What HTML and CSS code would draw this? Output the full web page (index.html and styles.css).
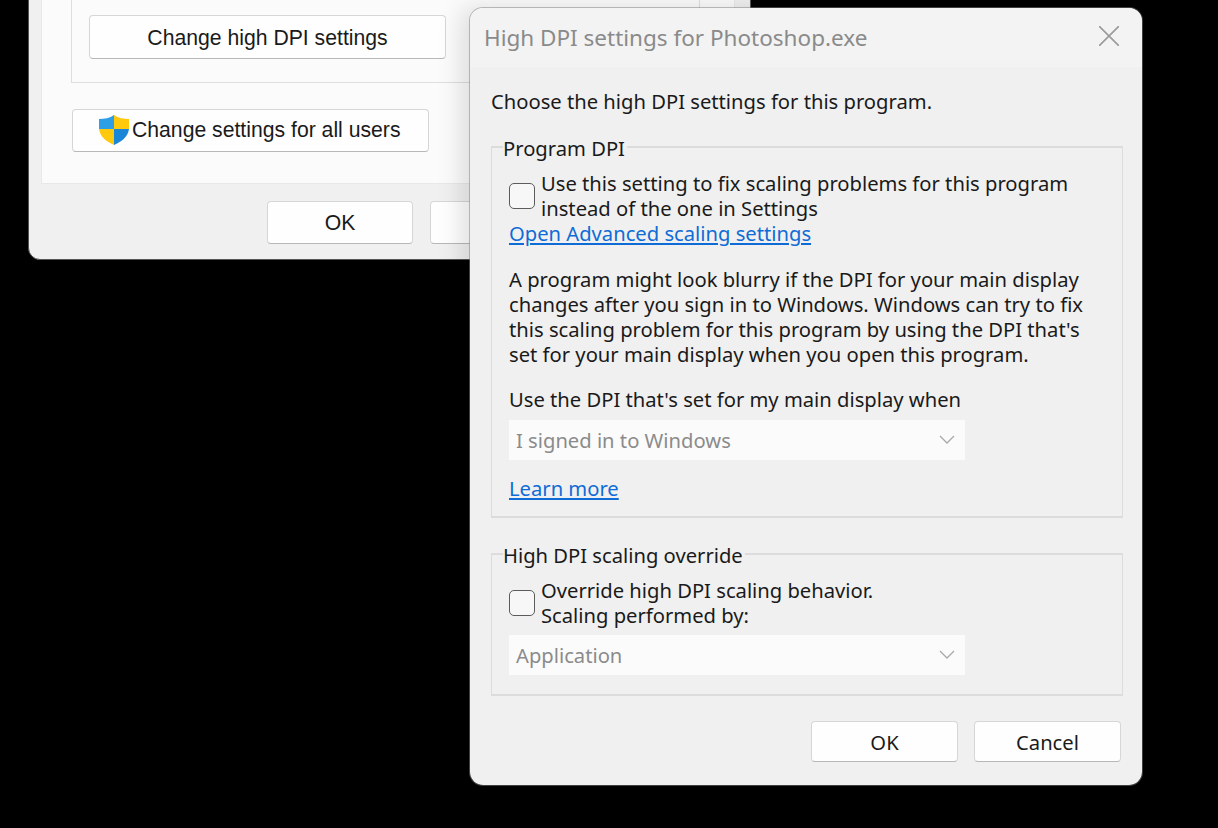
FILE: index.html
```html
<!DOCTYPE html>
<html lang="en">
<head>
    <meta charset="UTF-8">
    <title>High DPI settings for Photoshop.exe</title>
    <link rel="stylesheet" href="styles.css">
</head>
<body>

<div class="window back-window">
    <div class="back-panel">
        <div class="back-group">
            <button class="btn btn-dpi">Change high DPI settings</button>
        </div>
        <button class="btn btn-users">
            <svg class="shield" width="32" height="32" viewBox="0 0 32 32">
                <path d="M16 1 C12 4 6 5 1 5 V15 H16 Z" fill="#2c9fe6"/>
                <path d="M16 1 C20 4 26 5 31 5 V15 H16 Z" fill="#ffc90e"/>
                <path d="M1 15 H16 V31 C9 28 2 23 1 15 Z" fill="#ffc90e"/>
                <path d="M31 15 H16 V31 C23 28 30 23 31 15 Z" fill="#1a86d8"/>
            </svg>
            Change settings for all users
        </button>
    </div>
    <div class="back-footer">
        <button class="btn btn-footer">OK</button>
        <button class="btn btn-footer"></button>
    </div>
</div>

<div class="window dialog">
    <div class="title-bar">
        <span class="title">High DPI settings for Photoshop.exe</span>
        <svg class="close" width="20" height="20" viewBox="0 0 20 20">
            <path d="M0 0 L20 20 M20 0 L0 20" stroke="#9a9a9a" stroke-width="1.6" fill="none"/>
        </svg>
    </div>
    <div class="dialog-body">
        <p class="intro">Choose the high DPI settings for this program.</p>

        <fieldset class="group group-program">
            <legend>Program DPI</legend>
            <div class="check-row">
                <span class="checkbox"></span>
                <span>Use this setting to fix scaling problems for this program<br>instead of the one in Settings</span>
            </div>
            <a class="link" href="#">Open Advanced scaling settings</a>
            <p class="desc">A program might look blurry if the DPI for your main display<br>changes after you sign in to Windows. Windows can try to fix<br>this scaling problem for this program by using the DPI that's<br>set for your main display when you open this program.</p>
            <p class="use-label">Use the DPI that's set for my main display when</p>
            <div class="select">
                <span>I signed in to Windows</span>
                <svg width="16" height="10" viewBox="0 0 16 10"><path d="M1 1 L8 8 L15 1" stroke="#a8a8a8" stroke-width="1.3" fill="none"/></svg>
            </div>
            <a class="link learn" href="#">Learn more</a>
        </fieldset>

        <fieldset class="group group-override">
            <legend>High DPI scaling override</legend>
            <div class="check-row">
                <span class="checkbox"></span>
                <span>Override high DPI scaling behavior.<br>Scaling performed by:</span>
            </div>
            <div class="select select-app">
                <span>Application</span>
                <svg width="16" height="10" viewBox="0 0 16 10"><path d="M1 1 L8 8 L15 1" stroke="#a8a8a8" stroke-width="1.3" fill="none"/></svg>
            </div>
        </fieldset>

        <div class="dialog-footer">
            <button class="btn btn-dialog">OK</button>
            <button class="btn btn-dialog">Cancel</button>
        </div>
    </div>
</div>

</body>
</html>
```

FILE: styles.css
```css
body {
    margin: 0;
    width: 1218px;
    height: 828px;
    background: #000;
    overflow: hidden;
    position: relative;
}
.window {
    position: absolute;
    box-sizing: border-box;
    background: #f0f0f0;
}
.btn {
    display: block;
    box-sizing: border-box;
    background: #fefefe;
    border: 1px solid #d6d6d6;
    border-bottom-color: #b8b8b8;
    border-radius: 4px;
    color: #1a1a1a;
    padding: 0;
}

/* back window */
.back-window {
    left: 28px;
    top: -100px;
    width: 723px;
    height: 360px;
    border: 1px solid #555;
    border-radius: 0 0 12px 12px;
    font-family: "Liberation Sans", Arial, sans-serif;
    font-size: 21.2px;
    display: flex;
    flex-direction: column;
}
.back-panel {
    height: 283px;
    margin-left: 12px;
    margin-right: 15px;
    background: #fbfbfb;
    border: 1px solid #e8e8e8;
    border-top: none;
    box-sizing: border-box;
    padding-left: 29px;
}
.back-group {
    box-sizing: border-box;
    height: 182px;
    margin-right: 34px;
    border: 1px solid #dedede;
    border-top: none;
    padding: 114px 0 0 17px;
}
.btn-dpi {
    width: 357px;
    height: 44px;
    padding-top: 1px;
    font: inherit;
}
.btn-users {
    display: flex;
    align-items: center;
    gap: 2px;
    width: 357px;
    height: 43px;
    margin: 26px 0 0 1px;
    padding: 0 0 2px 25px;
    font: inherit;
}
.shield {
    flex: none;
}
.back-footer {
    display: flex;
    gap: 17px;
    padding: 17px 0 0 238px;
}
.btn-footer {
    width: 146px;
    height: 43px;
    font: inherit;
}

/* dialog */
.dialog {
    left: 469px;
    top: 7px;
    width: 674px;
    height: 779px;
    border: 1px solid rgba(128, 128, 128, 0.5);
    border-radius: 14px;
    background-clip: padding-box;
    font-family: "Noto Sans", Tahoma, sans-serif;
    font-size: 20.2px;
    color: #1a1a1a;
    box-shadow: -8px 0 24px rgba(0, 0, 0, 0.12);
}
.title-bar {
    display: flex;
    justify-content: space-between;
    align-items: center;
    height: 59px;
    padding: 0 23px 4px 14px;
    box-sizing: border-box;
    background: #f3f3f3;
    border-radius: 13px 13px 0 0;
}
.title {
    margin-top: 4px;
    font-size: 22.5px;
    color: #8a8a8a;
}
.dialog-body {
    padding: 0 19px 0 21px;
}
.intro {
    margin: 0;
    padding-top: 22px;
    line-height: 25px;
}
.group {
    margin: 18px 0 0;
    padding: 0 17px;
    border: 1px solid #dcdcdc;
    border-width: 2px 1px;
    line-height: 25px;
}
.group legend {
    padding: 4px 2px 0 0;
    margin-left: -6px;
}
.check-row {
    display: flex;
    gap: 6px;
    align-items: center;
    padding-top: 10px;
}
.checkbox {
    flex: none;
    box-sizing: border-box;
    width: 26px;
    height: 26px;
    background: #f7f7f7;
    border: 1px solid #5c5c5c;
    border-radius: 5px;
}
.link {
    display: inline-block;
    color: #0f6cd6;
}
.desc {
    margin: 21px 0 0;
}
.use-label {
    margin: 20px 0 0;
}
.select {
    display: flex;
    justify-content: space-between;
    align-items: center;
    box-sizing: border-box;
    width: 456px;
    height: 40px;
    margin-top: 8px;
    padding: 0 10px 0 7px;
    background: #fbfbfb;
    color: #8b8b8b;
}
.learn {
    margin: 16px 0 15px;
}
.group-override {
    margin-top: 21px;
    padding-bottom: 19px;
}
.select-app {
    margin-top: 7px;
}
.dialog-footer {
    display: flex;
    justify-content: flex-end;
    gap: 16px;
    margin-top: 25px;
    padding-right: 2px;
}
.btn-dialog {
    width: 147px;
    height: 41px;
    font: inherit;
}
```
